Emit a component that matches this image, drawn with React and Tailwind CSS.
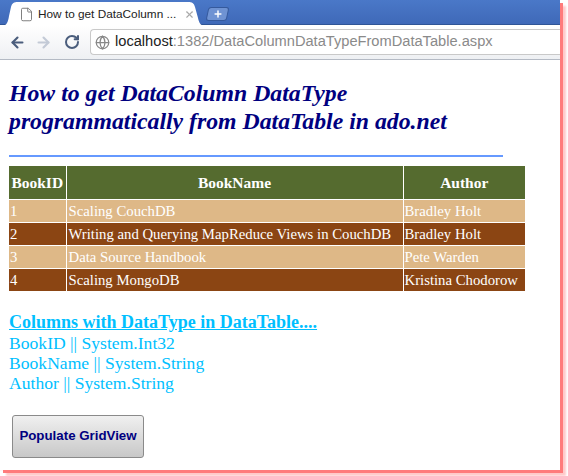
import React from 'react';
import { ArrowLeft, ArrowRight, RotateCw, Globe, X, Plus, File } from 'lucide-react';

const rows = [
  { id: 1, name: 'Scaling CouchDB', author: 'Bradley Holt' },
  { id: 2, name: 'Writing and Querying MapReduce Views in CouchDB', author: 'Bradley Holt' },
  { id: 3, name: 'Data Source Handbook', author: 'Pete Warden' },
  { id: 4, name: 'Scaling MongoDB', author: 'Kristina Chodorow' },
];

const columns = ['BookID || System.Int32', 'BookName || System.String', 'Author || System.String'];

function TabStrip() {
  return (
    <div className="relative h-[25px] bg-gradient-to-b from-[#4a78c8] to-[#3f69b8] border-b border-[#2f5596]">
      <svg className="absolute left-0 top-[1px]" width="205" height="25" viewBox="0 0 205 25">
        <path d="M1 25 C7 25 8 21 9 15 L11 6 C12 2 14 1 18 1 L188 1 C192 1 194 2 195 6 L198 17 C199 22 201 25 205 25 Z" fill="#ffffff" />
      </svg>
      <div className="absolute left-[19px] top-[6px] flex items-center w-[176px]">
        <File size={15} strokeWidth={1.5} className="text-[#777] shrink-0" />
        <span className="ml-[4px] text-[11.8px] leading-[16px] text-[#222] font-['Liberation_Sans',sans-serif] whitespace-nowrap">How to get DataColumn ...</span>
        <X size={11} strokeWidth={2.5} className="ml-auto text-[#aaa]" />
      </div>
      <div className="absolute left-[207px] top-[7px] w-[21px] h-[14px] rounded-[3px] bg-[#6f93d3] border border-[#35599c] flex items-center justify-center -skew-x-12">
        <Plus size={10} strokeWidth={3.5} className="text-white skew-x-12" />
      </div>
    </div>
  );
}

function Toolbar() {
  return (
    <div className="flex items-center h-[35px] bg-gradient-to-b from-white to-[#eef0f3] border-b border-[#b4bac4]">
      <ArrowLeft size={17} strokeWidth={3} className="ml-[9px] text-[#4a5d7c]" />
      <ArrowRight size={17} strokeWidth={3} className="ml-[9px] text-[#c3cad6]" />
      <RotateCw size={16} strokeWidth={3} className="ml-[12px] text-[#4a5d7c]" />
      <div className="flex items-center ml-[10px] flex-1 h-[26px] bg-white border border-r-0 border-[#c9c9c9] rounded-l-[4px]">
        <Globe size={15} strokeWidth={2} className="ml-[4px] text-[#888]" />
        <span className="ml-[5px] text-[14.65px] font-['Liberation_Sans',sans-serif] whitespace-nowrap">
          <span className="text-[#222]">localhost</span>
          <span className="text-[#8a8a8a]">:1382/DataColumnDataTypeFromDataTable.aspx</span>
        </span>
      </div>
    </div>
  );
}

export default function App() {
  return (
    <div className="w-[568px] h-[476px] overflow-hidden bg-white">
      <div className="w-[560px] h-[470px] overflow-hidden bg-white shadow-[3px_3px_0_#ff7b7b,6px_6px_2px_#ffc9c9,-3px_0_2px_#ffe3e3]">
        <TabStrip />
        <Toolbar />
        <div className="pl-[9px] font-['Liberation_Serif',serif]">
          <h1 className="pt-[19px] text-[23.75px] leading-[28px] font-bold italic text-[#000080]">
            How to get DataColumn DataType<br />programmatically from DataTable in ado.net
          </h1>
          <div className="mt-[20px] w-[494px] h-[2px] bg-[#6699ff]" />
          <table className="mt-[9px] w-[516px] table-fixed border-collapse text-[14.75px] text-white">
            <thead>
              <tr className="h-[33px] bg-[#556b2f] text-[15.5px]">
                <th className="w-[57px] border-r border-white font-bold">BookID</th>
                <th className="border-r border-white font-bold">BookName</th>
                <th className="w-[122px] font-bold">Author</th>
              </tr>
            </thead>
            <tbody>
              {rows.map(row => (
                <tr key={row.id} className={row.id % 2 ? 'h-[22.75px] bg-[#deb887] border-t border-white' : 'h-[22.75px] bg-[#8b4513] border-t border-white'}>
                  <td className="pl-[1px] border-r border-white">{row.id}</td>
                  <td className="pl-[2px] border-r border-white whitespace-nowrap">{row.name}</td>
                  <td className="pl-[1px] whitespace-nowrap">{row.author}</td>
                </tr>
              ))}
            </tbody>
          </table>
          <div className="mt-[21px] text-[17.6px] leading-[20.4px] text-[#00bfff]">
            <div className="font-bold underline text-[18px]">Columns with DataType in DataTable....</div>
            {columns.map(c => (
              <div key={c}>{c}</div>
            ))}
          </div>
          <button className="mt-[21px] ml-[3px] block w-[132px] h-[43px] rounded-[3px] border border-[#8a8a8a] bg-gradient-to-b from-[#f0f0f0] to-[#c8c8c8] text-[13.3px] font-bold text-[#000080] font-['Liberation_Sans',sans-serif]">
            Populate GridView
          </button>
        </div>
      </div>
    </div>
  );
}
